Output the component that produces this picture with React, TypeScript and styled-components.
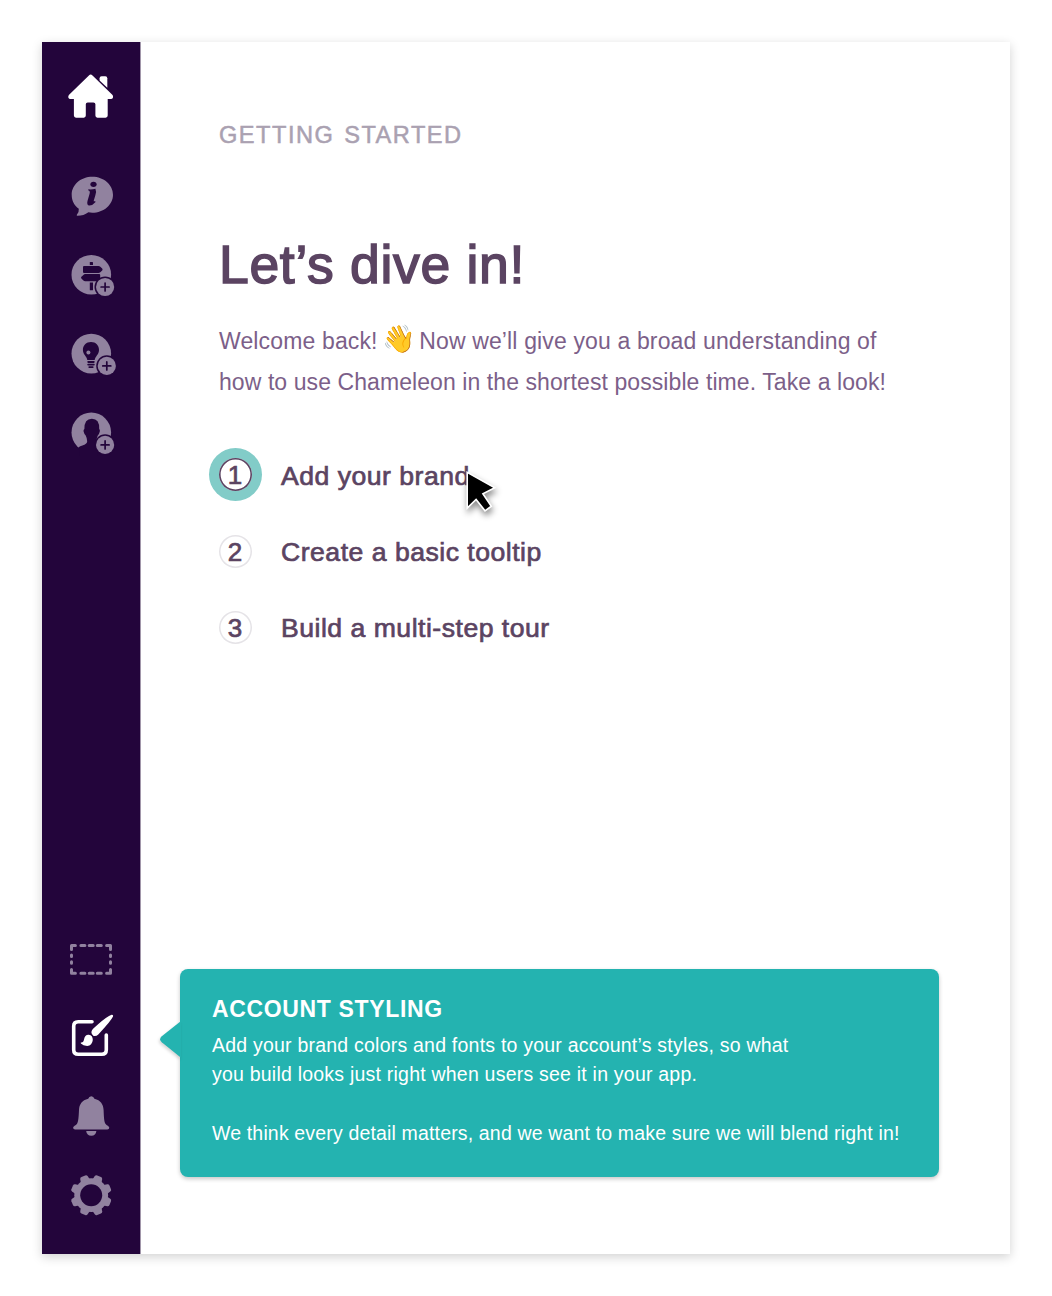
import React from "react";
import styled, { createGlobalStyle } from "styled-components";

const color = {
  plum: "#23053b",
  muted: "#91829f",
  heading: "#5b4462",
  body: "#7c5f89",
  eyebrow: "#aaa1b1",
  teal: "#24b3b0",
  halo: "#82ccc8",
};

const GlobalStyle = createGlobalStyle`
  *, *::before, *::after { box-sizing: border-box; }
  body {
    margin: 0;
    background: #fff;
    font-family: "Liberation Sans", Arial, sans-serif;
  }
`;

const Page = styled.div`
  height: 1296px;
  padding: 42px;
`;

const Panel = styled.div`
  display: flex;
  width: 968px;
  height: 1212px;
  background: #fff;
  box-shadow: 0 3px 10px rgba(0, 0, 0, 0.18);
`;

const Sidebar = styled.nav`
  display: flex;
  flex-direction: column;
  justify-content: space-between;
  width: 99px;
  flex: none;
  padding: 15px 0 18px;
  border-right: 1px solid #a196aa;
  background: ${color.plum};
  background-clip: padding-box;
`;

const NavGroup = styled.div`
  display: flex;
  flex-direction: column;
`;

const NavButton = styled.button<{ $active?: boolean; $spaced?: boolean }>`
  display: block;
  width: 98px;
  height: 79px;
  margin: 0 0 ${(p) => (p.$spaced ? "21px" : "0")};
  padding: 0;
  border: 0;
  background: none;
  color: ${(p) => (p.$active ? "#fff" : color.muted)};
`;

const Glyph = styled.svg`
  display: block;
  width: 98px;
  height: 79px;
  fill: currentColor;
`;

const Main = styled.main`
  display: flex;
  flex-direction: column;
  flex: 1;
  min-width: 0;
  padding: 79px 0 77px 78px;
`;

const Eyebrow = styled.div`
  height: 28px;
  line-height: 28px;
  font-size: 23.6px;
  letter-spacing: 1.5px;
  word-spacing: 1.8px;
  color: ${color.eyebrow};
  -webkit-text-stroke: 0.5px ${color.eyebrow};
`;

const Title = styled.h1`
  margin: 85px 0 0;
  line-height: 62px;
  font-size: 53.5px;
  font-weight: 400;
  letter-spacing: 0.68px;
  color: ${color.heading};
  -webkit-text-stroke: 1.5px ${color.heading};
`;

const Intro = styled.p`
  margin: 25px 0 0;
  font-size: 23px;
  line-height: 41px;
  color: ${color.body};
`;

const IntroLine = styled.span<{ $tracking: number }>`
  display: flex;
  height: 41px;
  white-space: nowrap;
  letter-spacing: ${(p) => p.$tracking}px;
`;

const Wave = styled.span`
  width: 41.6px;
  padding-left: 4.5px;
  font-size: 27px;
  line-height: 37px;
  letter-spacing: 0;
`;

const Steps = styled.ol`
  display: flex;
  flex-direction: column;
  margin: 35px 0 0;
  padding: 0;
  list-style: none;
`;

const Step = styled.li`
  position: relative;
  display: flex;
  align-items: center;
  gap: 29px;
  height: 75.9px;
`;

const StepNumber = styled.span<{ $current?: boolean }>`
  display: flex;
  align-items: center;
  justify-content: center;
  width: 33px;
  height: 33px;
  margin-bottom: ${(p) => (p.$current ? "2px" : "0")};
  padding-right: 1px;
  border-radius: 50%;
  background: #fff;
  box-shadow: ${(p) =>
    p.$current
      ? `inset 0 0 0 1.6px ${color.heading}, 0 0 0 10px ${color.halo}`
      : "inset 0 0 0 1.5px #e5e3e7"};
  font-size: 26px;
  line-height: 30px;
  color: ${color.heading};
  -webkit-text-stroke: 0.7px ${color.heading};
`;

const StepLabel = styled.span`
  font-size: 26.6px;
  line-height: 34px;
  letter-spacing: 0.5px;
  color: ${color.heading};
  -webkit-text-stroke: 0.7px ${color.heading};
`;

const Cursor = styled.svg`
  position: absolute;
  left: 241px;
  top: 26px;
  width: 50px;
  height: 60px;
  filter: drop-shadow(1px 4px 3px rgba(0, 0, 0, 0.45));
`;

const Callout = styled.section`
  position: relative;
  width: 759px;
  height: 208px;
  margin: auto 0 0 -39px;
  padding: 25px 32px 0;
  border-radius: 8px;
  background: ${color.teal};
  color: #fff;
  box-shadow: 0 2px 4px rgba(0, 0, 0, 0.22);
`;

const CalloutArrow = styled.svg`
  position: absolute;
  left: -20px;
  top: 51px;
  width: 21px;
  height: 40px;
  overflow: visible;
  filter: drop-shadow(-1px 2px 1.5px rgba(0, 0, 0, 0.16));
`;

const CalloutTitle = styled.h2`
  margin: 0;
  font-size: 23px;
  line-height: 30px;
  letter-spacing: 0.65px;
`;

const CalloutText = styled.p`
  margin: 7px 0 0;
  font-size: 19.5px;
  line-height: 29.4px;
  letter-spacing: 0.22px;
  white-space: pre-line;

  & + & {
    margin-top: 29.4px;
    letter-spacing: 0.16px;
  }
`;

function HomeIcon() {
  return (
    <Glyph viewBox="0 0 98 79">
      <path d="M46.9 18.4Q48.7 16.8 50.5 18.4L70.3 37.8Q71.4 39 71 40.4Q70.5 41.9 68.8 41.9H65.7V58.6Q65.7 60.7 63.6 60.7H55.4Q53.4 60.7 53.4 58.6V47.3Q53.4 45.4 51.4 45.4H45.7Q43.8 45.4 43.8 47.3V58.6Q43.8 60.7 41.8 60.7H34Q31.9 60.7 31.9 58.6V41.9H28.5Q26.8 41.9 26.3 40.4Q26 39 27.1 37.8Z" />
      <path d="M57.6 23.4V21.2Q57.6 19.2 59.6 19.2H63.3Q65.3 19.2 65.3 21.2V30.8Z" />
    </Glyph>
  );
}

function InfoIcon() {
  return (
    <Glyph viewBox="0 0 98 79">
      <path d="M50.3 19.7C61.8 19.7 71 27.7 71 37.7S61.8 55.7 50.3 55.7Q48.3 55.7 46.4 55.3Q41.6 58.9 35.2 58.8Q34.2 58.4 35 57.6Q37.1 55.5 36.8 51.7C32.2 48.4 29.7 43.6 29.7 37.7C29.7 27.7 38.8 19.7 50.3 19.7Z" />
      <g fill={color.plum}>
        <ellipse cx="51.5" cy="27.3" rx="3.1" ry="2.6" />
        <path d="M46.4 33.6L46.3 32.3Q50 32.7 53.4 31.8Q54.7 34.3 53.3 38.6L51.8 43.4Q51.4 45.2 53 44L53.6 45.1Q50.7 48.6 47.3 48.5Q44.5 48 45.5 43.9L47.6 36.7Q48.4 33.8 46.4 33.6Z" />
      </g>
    </Glyph>
  );
}

function PlusBadge({ x, y }: { x: number; y: number }) {
  return (
    <g>
      <circle cx={x} cy={y} r="10.6" fill={color.plum} />
      <circle cx={x} cy={y} r="9.1" />
      <path
        d={`M${x - 4} ${y}h8M${x} ${y - 4}v8`}
        stroke={color.plum}
        strokeWidth="1.7"
        strokeLinecap="round"
      />
    </g>
  );
}

function TourIcon() {
  return (
    <Glyph viewBox="0 0 98 79">
      <circle cx="49.3" cy="38.7" r="19.8" />
      <g fill={color.plum}>
        <path d="M47.8 29V26.5Q47.8 25.9 48.4 25.9H50.4Q51 25.9 51 26.5V29Z" />
        <path d="M42 29.9H56.5Q57.5 29.9 58.3 30.7L60.2 32.6Q61 33.5 60.2 34.4L58.3 36.2Q57.5 37 56.5 37H42Q41 37 41 36V30.9Q41 29.9 42 29.9Z" />
        <path d="M43.2 38.1H57.2Q58.2 38.1 58.2 39.1V44.2Q58.2 45.2 57.2 45.2H43.2Q42.2 45.2 41.4 44.4L39.4 42.6Q38.6 41.7 39.4 40.8L41.4 38.9Q42.2 38.1 43.2 38.1Z" />
        <path d="M47.8 46.4H51V53.7Q51 54.3 50.4 54.3H48.4Q47.8 54.3 47.8 53.7Z" />
      </g>
      <PlusBadge x={63.1} y={51} />
    </Glyph>
  );
}

function BulbIcon() {
  return (
    <Glyph viewBox="0 0 98 79">
      <circle cx="49.3" cy="38.6" r="19.8" />
      <g fill={color.plum}>
        <path d="M49 27C44.2 27 40.9 30.5 40.9 35C40.9 39.5 44.9 41.2 45.3 45.1H52.7C53.1 41.2 57 39.5 57 35C57 30.5 53.8 27 49 27Z" />
        <rect x="45.3" y="46" width="7.4" height="1.9" rx="0.8" />
        <rect x="45.3" y="48.8" width="7.4" height="1.8" rx="0.8" />
        <rect x="46.4" y="51.3" width="5.2" height="1.7" rx="0.8" />
      </g>
      <circle cx="46.4" cy="37.6" r="2" />
      <PlusBadge x={64.8} y={50.9} />
    </Glyph>
  );
}

function UserIcon() {
  return (
    <Glyph viewBox="0 0 98 79">
      <circle cx="49.3" cy="38.4" r="19.8" />
      <path
        fill={color.plum}
        d="M36.6 53.2Q38 52.4 40.4 51.6Q45 50.2 45.2 47.2Q45.2 44.6 43.7 41.5Q42.2 40 41.6 37.4Q41.2 35.6 42.4 35Q42.2 24.7 49.9 24.7T57.2 35Q58.2 35.6 57.8 37.4Q57.2 40 55.8 41.5Q54.4 44.6 54.4 47.2L56 62H38Z"
      />
      <PlusBadge x={63.1} y={50.9} />
    </Glyph>
  );
}

function MarqueeIcon() {
  return (
    <Glyph viewBox="0 0 98 79">
      <g fill="none" stroke="currentColor" strokeWidth="3" strokeLinecap="round">
        <path
          strokeLinejoin="round"
          d="M33.4 25.5H29.5V29.4M64.6 25.5H68.5V29.4M33.4 53.3H29.5V49.4M64.6 53.3H68.5V49.4"
        />
        <path d="M38.9 25.5h4M47.2 25.5h4M55.3 25.5h4M38.9 53.3h4M47.2 53.3h4M55.3 53.3h4M29.5 35v1.6M29.5 41.7v1.6M68.5 35v1.6M68.5 41.7v1.6" />
      </g>
    </Glyph>
  );
}

function StylingIcon() {
  return (
    <Glyph viewBox="0 0 98 79">
      <path
        fill="none"
        stroke="currentColor"
        strokeWidth="3.6"
        strokeLinecap="round"
        d="M50 22.8H36.2Q31.7 22.8 31.7 27.3V50.8Q31.7 55.3 36.2 55.3H59.8Q64.3 55.3 64.3 50.8V36"
      />
      <path d="M69.6 15.7Q71.5 15.6 71 17.6Q68.8 22.4 56.3 35.4Q54.2 37.6 51.6 36.9Q49.3 35.7 49.4 33Q49.7 31.2 51.1 29.8Q63.6 18 69.6 15.7Z" />
      <path d="M39 43.4Q41.5 43.7 42 40.5Q42.8 35.5 46.8 35.8Q50.8 36.4 50.8 41Q50.2 46.6 45.2 46.9Q41 46.8 38.9 44.4Q38.5 43.6 39 43.4Z" />
    </Glyph>
  );
}

function BellIcon() {
  return (
    <Glyph viewBox="0 0 98 79">
      <path d="M49.3 18.3Q51.6 18.3 52.4 20.8C58.6 22.2 61.4 26.6 61.6 32C61.9 38 62 44 63.6 45.9C64.6 47.2 67.3 48 67.3 49.7Q67.2 51.4 65.3 51.4H33.1Q31.2 51.4 31.1 49.7C31.1 48 33.9 47.2 34.9 45.9C36.5 44 36.7 38 37 32C37.2 26.6 40 22.2 46.2 20.8Q47 18.3 49.3 18.3Z" />
      <path d="M44.2 53H54.4Q53.8 57.8 49.3 57.8T44.2 53Z" />
    </Glyph>
  );
}

const TEETH = [22.5, 67.5, 112.5, 157.5, 202.5, 247.5, 292.5, 337.5];

function GearIcon() {
  return (
    <Glyph viewBox="0 0 98 79">
      {TEETH.map((angle) => (
        <path
          key={angle}
          d="M44.2 24L45.2 19.2Q45.6 17.6 47.2 17.6H51.2Q52.8 17.6 53.2 19.2L54.2 24Z"
          transform={`rotate(${angle} 49.2 38.2)`}
        />
      ))}
      <circle cx="49.2" cy="38.2" r="16.9" />
      <circle cx="49.2" cy="38.2" r="11" fill={color.plum} />
    </Glyph>
  );
}

const STEPS = ["Add your brand", "Create a basic tooltip", "Build a multi-step tour"];

export default function App() {
  return (
    <Page>
      <GlobalStyle />
      <Panel>
        <Sidebar>
          <NavGroup>
            <NavButton $active $spaced aria-label="Home"><HomeIcon /></NavButton>
            <NavButton aria-label="Info"><InfoIcon /></NavButton>
            <NavButton aria-label="New tour"><TourIcon /></NavButton>
            <NavButton aria-label="New tip"><BulbIcon /></NavButton>
            <NavButton aria-label="New user"><UserIcon /></NavButton>
          </NavGroup>
          <NavGroup>
            <NavButton aria-label="Select area"><MarqueeIcon /></NavButton>
            <NavButton $active aria-label="Styling"><StylingIcon /></NavButton>
            <NavButton aria-label="Notifications"><BellIcon /></NavButton>
            <NavButton aria-label="Settings"><GearIcon /></NavButton>
          </NavGroup>
        </Sidebar>
        <Main>
          <Eyebrow>GETTING STARTED</Eyebrow>
          <Title>Let’s dive in!</Title>
          <Intro>
            <IntroLine $tracking={0.14}>
              <span>Welcome back!</span>
              <Wave>👋</Wave>
              <span>Now we’ll give you a broad understanding of</span>
            </IntroLine>
            <IntroLine $tracking={0.08}>
              how to use Chameleon in the shortest possible time. Take a look!
            </IntroLine>
          </Intro>
          <Steps>
            {STEPS.map((label, i) => (
              <Step key={label}>
                <StepNumber $current={i === 0}>{i + 1}</StepNumber>
                <StepLabel>{label}</StepLabel>
                {i === 0 && (
                  <Cursor viewBox="0 0 50 60">
                    <path
                      d="M7.2 8.4V44L16.1 35.4L25 46.8L31.3 42.2L22.9 29.8L34.8 23.8Z"
                      fill="#000"
                      stroke="#fff"
                      strokeWidth="1.6"
                    />
                  </Cursor>
                )}
              </Step>
            ))}
          </Steps>
          <Callout>
            <CalloutArrow viewBox="0 0 21 40">
              <path d="M21 0.9L1.8 16.3Q-1.6 19.3 1.8 22.3L21 37.7Z" fill={color.teal} />
            </CalloutArrow>
            <CalloutTitle>ACCOUNT STYLING</CalloutTitle>
            <CalloutText>
              {"Add your brand colors and fonts to your account’s styles, so what\nyou build looks just right when users see it in your app."}
            </CalloutText>
            <CalloutText>
              We think every detail matters, and we want to make sure we will blend right in!
            </CalloutText>
          </Callout>
        </Main>
      </Panel>
    </Page>
  );
}
